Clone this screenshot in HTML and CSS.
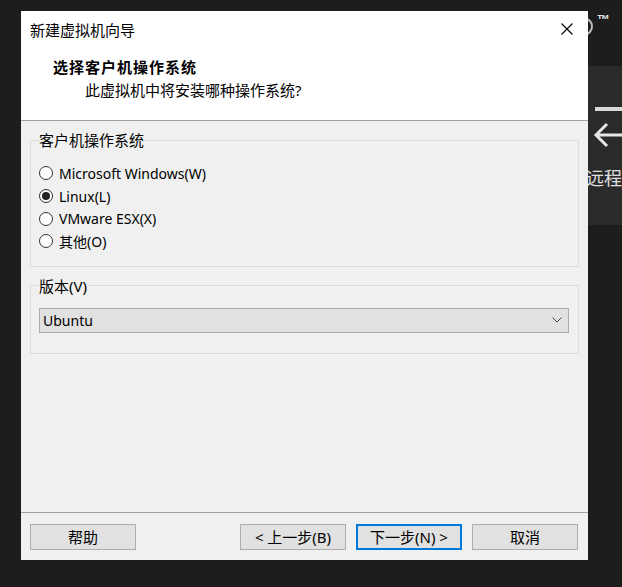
FILE: index.html
```html
<!DOCTYPE html>
<html lang="zh-CN">
<head>
<meta charset="utf-8">
<title>新建虚拟机向导</title>
<link rel="stylesheet" href="styles.css">
</head>
<body>
<div class="desktop">
  <div class="bg-logo">
    <span class="logo-ring"></span>
    <span class="tm">™</span>
  </div>
  <div class="bg-panel">
    <span class="bg-bar"></span>
    <svg class="bg-arrow" width="34" height="26" viewBox="0 0 34 26">
      <path d="M16 2 L5 13 L16 24 M5 13 H34" fill="none" stroke="#e6e6e6" stroke-width="3"/>
    </svg>
    <span class="bg-text">连接远程</span>
  </div>

  <div class="dialog">
    <div class="header">
      <div class="titlebar">
        <span class="title">新建虚拟机向导</span>
        <svg class="close" width="12" height="12" viewBox="0 0 12 12">
          <path d="M0.5 0.5 L11.5 11.5 M11.5 0.5 L0.5 11.5" stroke="#000" stroke-width="1.1" fill="none"/>
        </svg>
      </div>
      <div class="heading">选择客户机操作系统</div>
      <div class="subtitle">此虚拟机中将安装哪种操作系统?</div>
    </div>

    <div class="body">
      <fieldset class="group group-os">
        <legend>客户机操作系统</legend>
        <label class="radio-row"><span class="radio"></span>Microsoft Windows(W)</label>
        <label class="radio-row"><span class="radio checked"></span>Linux(L)</label>
        <label class="radio-row"><span class="radio"></span>VMware ESX(X)</label>
        <label class="radio-row"><span class="radio"></span>其他(O)</label>
      </fieldset>

      <fieldset class="group group-ver">
        <legend>版本(V)</legend>
        <div class="select">
          <span>Ubuntu</span>
          <svg class="chev" width="10" height="6" viewBox="0 0 10 6">
            <path d="M0.5 0.5 L5 5 L9.5 0.5" fill="none" stroke="#444" stroke-width="1"/>
          </svg>
        </div>
      </fieldset>
    </div>

    <div class="footer">
      <button class="btn">帮助</button>
      <div class="nav">
        <button class="btn">&lt; 上一步(B)</button>
        <button class="btn primary">下一步(N) &gt;</button>
        <button class="btn">取消</button>
      </div>
    </div>
  </div>
</div>
</body>
</html>
```

FILE: styles.css
```css
* { box-sizing: border-box; }

html, body {
  margin: 0;
  padding: 0;
  background: #1d1d1d;
}

body {
  font-family: "Noto Sans", "Noto Sans CJK SC", sans-serif;
  font-size: 15px;
  color: #000;
}

.desktop {
  position: relative;
  width: 622px;
  height: 587px;
  overflow: hidden;
  background: #1d1d1d;
}

/* background app pieces (behind the dialog window) */
.bg-logo {
  position: absolute;
  left: 572px;
  top: 10px;
  width: 50px;
  height: 40px;
}
.logo-ring {
  position: absolute;
  left: 2px;
  top: 7px;
  width: 19px;
  height: 19px;
  border: 2px solid #bdbdbd;
  border-radius: 50%;
}
.tm {
  position: absolute;
  left: 25px;
  top: 3px;
  color: #e8e8e8;
  font-family: "Liberation Sans", sans-serif;
  font-weight: bold;
  font-size: 13px;
  line-height: 14px;
}

.bg-panel {
  position: absolute;
  left: 560px;
  top: 66px;
  width: 62px;
  height: 159px;
  background: #2a2a2a;
}
.bg-bar {
  position: absolute;
  left: 35px;
  top: 41px;
  width: 27px;
  height: 4px;
  background: #d9d9d9;
}
.bg-arrow {
  position: absolute;
  left: 31px;
  top: 56px;
}
.bg-text {
  position: absolute;
  right: 0;
  top: 100px;
  color: #e0e0e0;
  font-family: "Noto Sans CJK SC", sans-serif;
  font-size: 18px;
  line-height: 22px;
  white-space: nowrap;
}

/* dialog window */
.dialog {
  position: absolute;
  left: 21px;
  top: 11px;
  width: 567px;
  height: 549px;
  background: #f0f0f0;
  display: flex;
  flex-direction: column;
  z-index: 2;
}

.header {
  background: #fff;
  height: 110px;
  border-bottom: 1px solid #a0a0a0;
  flex: none;
}

.titlebar {
  height: 38px;
  display: flex;
  align-items: center;
  justify-content: space-between;
  padding: 0 15px 0 9px;
}
.title {
  font-family: "Noto Sans CJK SC", sans-serif;
  font-size: 15px;
  line-height: 20px;
}
.close {
  display: block;
  margin-top: -2px;
}

.heading {
  margin-top: 8px;
  padding-left: 32px;
  font-family: "Noto Sans CJK SC", sans-serif;
  font-weight: bold;
  font-size: 15px;
  letter-spacing: 1px;
  line-height: 20px;
}
.subtitle {
  margin-top: 3px;
  padding-left: 64px;
  font-size: 15px;
  line-height: 20px;
}

.body {
  flex: 1;
  padding: 9px 9px 0 9px;
}

.group {
  margin: 0;
  border: 1px solid #dcdcdc;
  padding: 0 9px 0 8px;
  min-width: 0;
}
.group legend {
  padding: 0 1px 0 0;
  margin-left: 0;
  line-height: 20px;
  height: 20px;
  font-size: 15px;
}

.group-os {
  padding-top: 12px;
  padding-bottom: 13px;
}

.radio-row {
  display: flex;
  align-items: center;
  height: 22.7px;
  gap: 6px;
  white-space: nowrap;
  font-size: 14px;
}
.radio {
  width: 14px;
  height: 14px;
  min-width: 14px;
  border: 1px solid #333;
  border-radius: 50%;
  background: #fff;
  display: flex;
  align-items: center;
  justify-content: center;
  flex: none;
}
.radio.checked::after {
  content: "";
  width: 8px;
  height: 8px;
  border-radius: 50%;
  background: #222;
}

.group-ver {
  margin-top: 9px;
  padding-top: 12px;
  padding-bottom: 20px;
}

.select {
  height: 25px;
  background: #e1e1e1;
  border: 1px solid #adadad;
  display: flex;
  align-items: center;
  justify-content: space-between;
  padding: 0 6px 0 3px;
  font-size: 14px;
}
.chev { display: block; }

.footer {
  flex: none;
  border-top: 1px solid #a0a0a0;
  padding: 11px 10px 10px 9px;
  display: flex;
  justify-content: space-between;
}
.nav {
  display: flex;
  gap: 10px;
}
.btn {
  width: 106px;
  height: 26px;
  margin: 0;
  padding: 0;
  background: #e1e1e1;
  border: 1px solid #adadad;
  border-radius: 0;
  font-family: "Noto Sans", "Noto Sans CJK SC", sans-serif;
  font-size: 15px;
  line-height: 20px;
  color: #000;
}
.btn.primary {
  border: 2px solid #0078d7;
}
```
